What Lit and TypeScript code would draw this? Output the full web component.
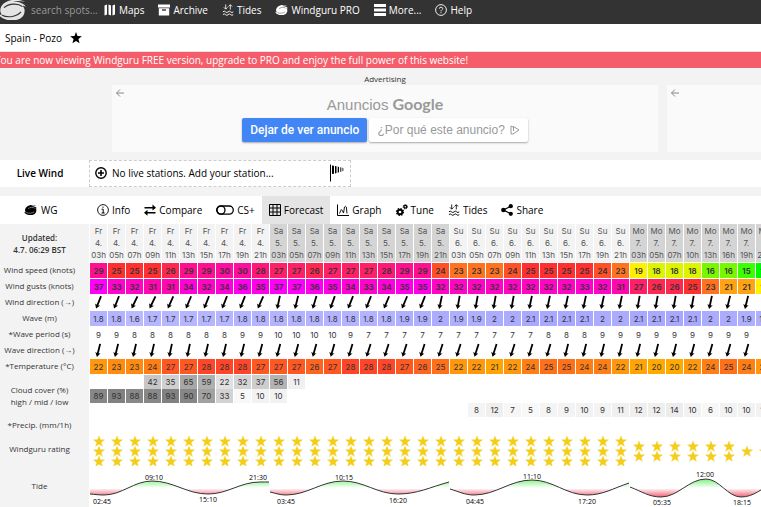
import { LitElement, html, svg, css, nothing } from "lit";
import { customElement } from "lit/decorators.js";
import { styleMap } from "lit/directives/style-map.js";
import { classMap } from "lit/directives/class-map.js";

const blob = svg`<path d="M27 3C21 -0.5 11 0 6 4.5C2 8 1 13 4 16.5C2.500 16.500 1 16 0 15C1.500 19.500 8 22.500 14 22.500C20 22.500 26 19.500 26.500 13.500C27 11 26 8.500 24.500 7C25.500 7 27 7.500 28 8.500C26.500 4.500 21 2.500 15 2.800C19 1.500 23 1.800 27 3Z" fill="currentColor"/>`;
const swirl = svg`${blob}
  <path d="M9 8.500C13 5.500 19 5 23 7.500M22 15.500C18 18.500 10 19.500 5 17" fill="none" class="cut" stroke-width="1"/>`;
const logo = svg`${blob}
  <path d="M6 9C11 4.500 20 4 24.500 8M23 13.500C19 18.500 10 20 4 17" fill="none" class="cut" stroke-width="1.200"/>`;

const waves = svg`
  <path d="M0.500 8.500q1.400 -1.600 2.800 0t2.800 0t2.800 0t2.800 0M0.500 11.500q1.400 -1.600 2.800 0t2.800 0t2.800 0t2.800 0" fill="none" stroke="currentColor"/>
  <path d="M3.500 0.500V5.500M1.500 3.600L3.500 5.600L5.500 3.600M8.500 6V1M6.500 2.700L8.500 0.700L10.500 2.700" fill="none" stroke="currentColor" stroke-width="0.900"/>`;

const icons: Record<string, [number, string, unknown]> = {
  wg: [13, "0 -1 28 25", swirl],
  maps: [12, "0 0 12 12", svg`<path d="M0.500 1.500L3 0.500V10.500L0.500 11.500ZM4.500 0.500L7 1.500V11.500L4.500 10.500ZM8.500 1.500L11 0.500V10.500L8.500 11.500Z" fill="currentColor"/>`],
  archive: [12, "0 0 12 12", svg`<path d="M0 0.500H12V3.500H0ZM0.800 4.300H11.200V11.500H0.800Z" fill="currentColor"/><path d="M4 6H8" class="cut" stroke-width="1.400"/>`],
  tides: [12, "0 0 12 13", waves],
  more: [12, "0 0 12 12", svg`<path d="M0 0H12V3H0ZM0 4.500H12V7.500H0ZM0 9H12V12H0Z" fill="currentColor"/>`],
  help: [12, "0 0 12 12", svg`<circle cx="6" cy="6" r="5.400" fill="none" stroke="currentColor" stroke-width="0.900"/><path d="M4.300 4.700Q4.400 3.200 6 3.200T7.700 4.600Q7.700 5.300 6.800 5.900T6 7.300M6 8.200V9.200" fill="none" stroke="currentColor" stroke-width="0.900"/>`],
  info: [12, "0 0 12 12", svg`<circle cx="6" cy="6" r="5.400" fill="none" stroke="currentColor" stroke-width="0.900"/><path d="M6 2.600V3.800M4.600 5.200H6.200V9M4.500 9H7.700" fill="none" stroke="currentColor"/>`],
  compare: [12, "0 0 12 12", svg`<path d="M0.500 3H8.500V0.500L12 3.700L8.500 6.500V4.500H0.500ZM11.500 8H3.500V5.800L0 8.800L3.500 11.800V9.500H11.500Z" fill="currentColor"/>`],
  toggle: [18, "0 0 18 12", svg`<rect x="0.700" y="2" width="16.600" height="8.200" rx="4.100" fill="none" stroke="currentColor" stroke-width="1.300"/><circle cx="5" cy="6.100" r="4" fill="none" stroke="currentColor" stroke-width="1.300"/>`],
  grid: [12, "0 0 12 12", svg`<path d="M0.500 0.500H11.500V11.500H0.500ZM0.500 4H11.500M0.500 8H11.500M4 0.500V11.500M8 0.500V11.500" fill="none" stroke="currentColor"/>`],
  graph: [12, "0 0 12 12", svg`<path d="M0.500 0.500V11.500H12" fill="none" stroke="currentColor"/><path d="M2.500 9.500L4.300 5.500L5.300 6.500L6.500 9L7.500 3Q8.500 1.500 9.300 3L10 9.500" fill="none" stroke="currentColor" stroke-width="0.900"/>`],
  tune: [12, "0 0 12 12", svg`<circle cx="4" cy="8" r="2.300" fill="none" stroke="currentColor" stroke-width="1.900"/><circle cx="4" cy="8" r="3.500" fill="none" stroke="currentColor" stroke-width="1.200" stroke-dasharray="1.400 1.350"/><circle cx="9.300" cy="2.700" r="1.400" fill="none" stroke="currentColor" stroke-width="1.300"/><circle cx="9.300" cy="2.700" r="2.200" fill="none" stroke="currentColor" stroke-width="0.900" stroke-dasharray="0.900 0.830"/>`],
  share: [12, "0 0 12 12", svg`<path d="M9.800 2.200L2.500 6L9.800 9.800" fill="none" stroke="currentColor" stroke-width="1.300"/><circle cx="2.400" cy="6" r="2.300" fill="currentColor"/><circle cx="9.800" cy="2.200" r="2.100" fill="currentColor"/><circle cx="9.800" cy="9.800" r="2.100" fill="currentColor"/>`],
};

const icon = (name: string) => {
  const [width, box, shape] = icons[name];
  return html`<svg class="icon" width=${width} height="12" viewBox=${box} aria-hidden="true">${shape}</svg>`;
};

const nums = (s: string) => s.split(" ").map((v) => (v === "_" ? "" : v));

const days = [
  { name: "Fr", date: "4.", hours: nums("03 05 07 09 11 13 15 17 19 21") },
  { name: "Sa", date: "5.", hours: nums("03 05 07 09 11 13 15 17 19 21") },
  { name: "Su", date: "6.", hours: nums("03 05 07 09 11 13 15 17 19 21") },
  { name: "Mo", date: "7.", hours: nums("03 05 07 10 13 16 19 22") },
];

const speed = nums("29 25 25 25 26 29 29 30 30 28 27 27 26 27 27 27 28 29 29 24 23 23 23 24 25 25 25 25 24 23 19 18 18 18 16 16 15 14");
const gusts = nums("37 33 32 31 31 34 32 34 36 35 37 37 36 35 34 33 34 35 35 32 32 32 32 32 32 32 32 33 32 31 27 26 26 25 23 21 21 19");
const windDir = nums("22 22 26 26 24 23 22 22 22 24 12 14 17 20 22 22 23 23 22 12 10 10 10 10 12 12 12 12 12 12 10 10 10 10 12 14 14 14").map(Number);
const wave = nums("1.8 1.8 1.6 1.7 1.7 1.7 1.7 1.7 1.8 1.8 1.8 1.8 1.8 1.8 1.8 1.8 1.8 1.9 1.9 2 1.9 1.9 2 2 2.1 2.1 2.1 2.1 2 2 2.1 2.1 2.1 2.1 2 2 1.9 1.9");
const period = nums("9 9 8 8 8 8 8 8 9 9 10 10 10 10 9 7 7 7 7 7 7 7 7 7 7 8 8 8 9 9 9 9 9 9 9 9 9 9");
const waveDir = nums("14 14 13 13 12 12 13 13 14 15 15 15 16 16 17 18 18 18 18 18 18 18 18 18 17 17 14 14 14 14 14 14 14 15 16 16 16 16").map(Number);
const temperature = nums("22 23 23 24 27 27 28 28 28 27 27 27 26 27 28 28 28 27 26 25 22 22 21 22 24 25 25 24 24 22 21 20 20 22 24 25 24 22");
const cloudHigh = nums("_ _ _ 42 35 65 59 22 32 37 56 11 _ _ _ _ _ _ _ _ _ _ _ _ _ _ _ _ _ _ _ _ _ _ _ _ _ _");
const cloudMid = nums("89 93 88 88 93 90 70 33 5 10 10 _ _ _ _ _ _ _ _ _ _ _ _ _ _ _ _ _ _ _ _ _ _ _ _ _ _ _");
const cloudLow = nums("_ _ _ _ _ _ _ _ _ _ _ _ _ _ _ _ _ _ _ _ _ 8 12 7 5 8 9 10 9 11 12 12 14 10 6 10 10 10");
const rating = [...Array(30).fill(3), ...Array(6).fill(2), 1, 1] as number[];

const windScale: Record<string, string> = {
  14: "#00f800", 15: "#3cff00", 16: "#78f800", 18: "#dcf400", 19: "#fff000", 21: "#ffa214", 23: "#ff7220",
  24: "#ff5028", 25: "#ff3030", 26: "#ff2850", 27: "#ff2068", 28: "#ff1878", 29: "#ff1090", 30: "#ff0ca0",
  31: "#ff08b0", 32: "#ff06c4", 33: "#ff04cc", 34: "#ff02d8", 35: "#ff00e8", 36: "#ff00f0", 37: "#ff00fa",
};
const tempScale: Record<string, string> = {
  20: "#ffaa00", 21: "#ffa404", 22: "#ff980c", 23: "#ff8c10", 24: "#ff7e16", 25: "#ff701a", 26: "#ff6420", 27: "#ff5822", 28: "#ff4628",
};
const waveScale = (v: string) => {
  const c = Math.round(186 - (Number(v) - 1.6) * 36);
  return `rgb(${c}, ${c}, 255)`;
};
const cloudScale = (v: string) => {
  if (!v) return "transparent";
  const c = Math.round(255 - Number(v) * 1.35);
  return `rgb(${c}, ${c}, ${c})`;
};

type Knot = [x: number, y: number, extreme: 0 | 1];
const BASE = 23;
const tideDays: Knot[][] = [
  [[0, 28, 0], [14, 29, 1], [62, 15, 1], [118, 28, 1], [170, 16, 1], [179, 16, 0]],
  [[180, 26, 0], [196, 29, 1], [253, 15, 1], [308, 28, 1], [359, 16, 0]],
  [[360, 23, 0], [384, 29, 1], [442, 14, 1], [497, 29, 1], [539, 17, 0]],
  [[540, 21, 0], [571, 31, 1], [616, 13, 1], [651, 31, 1], [684, 16, 0]],
];
const tideLabels: [number, number, string][] = [
  [12, 38, "02:45"], [64, 14, "09:10"], [118, 36, "15:10"], [168, 14, "21:30"], [196, 38, "03:45"], [254, 14, "10:15"],
  [308, 37, "16:20"], [385, 38, "04:45"], [442, 13, "11:10"], [497, 38, "17:20"], [572, 39, "05:35"], [615, 11, "12:00"], [652, 39, "18:15"],
];
const tidePath = (knots: Knot[]) => {
  let d = `M${knots[0][0]} ${knots[0][1]}`;
  for (let i = 1; i < knots.length; i++) {
    const [x0, y0, e0] = knots[i - 1];
    const [x1, y1, e1] = knots[i];
    const dx = (x1 - x0) * 0.38;
    const dy = (y1 - y0) * 0.45;
    d += `C${x0 + dx} ${e0 ? y0 : y0 + dy} ${x1 - dx} ${e1 ? y1 : y1 - dy} ${x1} ${y1}`;
  }
  return d;
};

@customElement("app-root")
export class AppRoot extends LitElement {
  static styles = css`
    :host {
      display: block;
      overflow: hidden;
      background: #fff;
      color: #000;
      font: 10px/16px "Open Sans", "Noto Sans", sans-serif;
    }
    a { color: inherit; text-decoration: none; }
    button, input { font: inherit; color: inherit; border: 0; background: none; padding: 0; margin: 0; }
    .icon { flex: none; overflow: visible; }
    .cut { stroke: #fff; }
    .top {
      display: flex;
      align-items: center;
      height: 24px;
      padding-bottom: 4px;
      box-sizing: border-box;
      background: #333;
      color: #fff;
      white-space: nowrap;
    }
    .top .cut { stroke: #333; }
    .logo { flex: none; width: 26px; height: 20px; overflow: hidden; color: #e4e4e4; }
    .logo svg { display: block; margin-left: -2px; }
    .search { width: 69px; margin-left: 5px; height: 16px; }
    .search::placeholder { color: #999; opacity: 1; }
    .links { display: flex; gap: 14px; margin-left: 4px; }
    .links a { display: flex; align-items: center; gap: 3px; }
    .spot { display: flex; align-items: center; gap: 8px; height: 27px; padding-left: 5px; border-bottom: 1px solid #e4e4e4; }
    .banner { display: block; height: 16px; background: #f55d6a; color: #fff; text-indent: -5px; white-space: nowrap; overflow: hidden; }
    .ads { display: flex; gap: 9px; padding: 5px 0 8px 112px; background: #f3f3f3; }
    .slot { flex: none; width: 546px; text-align: center; font-size: 8px; line-height: 12px; color: #333; }
    .ad {
      height: 67px;
      box-sizing: border-box;
      background: #fafafa;
      display: grid;
      grid-template-columns: 12px 1fr 12px;
      padding: 4px 2px;
      color: #999;
    }
    .ad-body { font: 14px/16px "Liberation Sans", Arial, sans-serif; padding-top: 7px; }
    .ad-title { display: flex; justify-content: center; align-items: baseline; gap: 4px; font-size: 15px; margin-bottom: 5px; }
    .google { font-family: Lato, sans-serif; font-size: 16px; font-weight: 700; }
    .ad-buttons { display: flex; justify-content: center; gap: 2px; font-size: 12px; }
    .ad-buttons button {
      height: 24px;
      padding: 0 8px;
      border-radius: 2px;
      background: #fff;
      box-shadow: 0 1px 2px #0005;
      display: flex;
      align-items: center;
      gap: 5px;
    }
    .ad-buttons .mute { background: #4285f4; color: #fff; font-family: Roboto, sans-serif; font-weight: 500; }
    .live { display: flex; height: 27px; align-items: center; border-bottom: 9px solid #f3f3f3; }
    .live-label { width: 89px; box-sizing: border-box; padding: 0 9px 1px 0; text-align: center; font-weight: 600; }
    .station {
      display: flex;
      align-items: center;
      gap: 5px;
      width: 262px;
      height: 27px;
      box-sizing: border-box;
      padding: 0 6px 1px 5px;
      border: 1px dashed #ccc;
    }
    .sock { margin-left: auto; }
    .tabs { display: flex; height: 28px; white-space: nowrap; }
    .tabs a, .model { display: flex; align-items: center; gap: 3px; padding: 0 7px 1px; }
    .model { width: 90px; box-sizing: border-box; padding-left: 24px; gap: 4px; }
    .tabs .current { background: #e4e4e4; }
    .forecast {
      table-layout: fixed;
      width: 774px;
      border-spacing: 0;
      border-bottom: 1px solid #ccc;
      font: 8px/12px Inter, sans-serif;
      color: #333;
      text-align: center;
    }
    .label-col { width: 90px; }
    .forecast th, .forecast td { padding: 0; box-sizing: border-box; border-right: 1px solid #fff; overflow: hidden; }
    .forecast .label {
      background: #f3f3f3;
      background-clip: padding-box;
      font: 8px/12px "Open Sans", "Noto Sans", sans-serif;
      padding: 0 10px 2px 0;
      white-space: nowrap;
    }
    .forecast .updated { font-weight: 600; padding-bottom: 0; border-bottom: 0; }
    .head th { height: 39px; font-weight: 400; color: #555; border-bottom: 1px solid #fff; background: #f3f3f3; background-clip: padding-box; }
    .head .updated { color: #333; }
    .head .alt { background-color: #d4d4d4; }
    .row { height: 16px; }
    .row td { border-bottom: 1px solid #fff; height: 16px; background-clip: padding-box; }
    .strong td { font-weight: 600; }
    .cloud td { height: 14px; background-clip: padding-box; }
    .cloud-last td { height: 15px; border-bottom: 1px solid #fff; }
    .stars-row td { height: 31px; }
    .stars { display: flex; flex-direction: column; align-items: center; padding-top: 2px; }
    .stars svg, .arrow, .tide { display: block; overflow: visible; }
    .forecast .tide-cell { height: 41px; border-right: 0; }
    .tide text { font: 7px "Open Sans", sans-serif; text-anchor: middle; fill: #000; }
  `;

  private label(text: unknown, rows = 1) {
    return html`<th class="label" scope="row" rowspan=${rows}>${text}</th>`;
  }

  private cells(values: string[], color?: (v: string) => string) {
    return values.map((v) => html`<td style=${color ? styleMap({ backgroundColor: color(v) }) : nothing}>${v}</td>`);
  }

  private arrows(angles: number[]) {
    return angles.map((a) => html`<td><svg class="arrow" width="17" height="15" viewBox="-8.500 -7.500 17 15" role="img" aria-label="${a} degrees">
      <g transform="rotate(${a})"><path d="M-0.900 -6.800H0.900V2.800L2.700 2.200L0 6.600L-2.700 2.200L-0.900 2.800Z" fill="#000"/></g></svg></td>`);
  }

  private table() {
    return html`<table class="forecast">
      <colgroup><col class="label-col" /><col span="38" /></colgroup>
      <thead>
        <tr class="head">
          <th class="label updated" scope="col">Updated:<br />4.7. 06:29 BST</th>
          ${days.map((d, i) => d.hours.map((h) => html`<th scope="col" class=${classMap({ alt: i % 2 === 1 })}>${d.name}<br />${d.date}<br />${h}h</th>`))}
        </tr>
      </thead>
      <tbody>
        <tr class="row strong">${this.label("Wind speed (knots)")}${this.cells(speed, (v) => windScale[v])}</tr>
        <tr class="row strong">${this.label("Wind gusts (knots)")}${this.cells(gusts, (v) => windScale[v])}</tr>
        <tr class="row">${this.label("Wind direction (→)")}${this.arrows(windDir)}</tr>
        <tr class="row">${this.label("Wave (m)")}${this.cells(wave, waveScale)}</tr>
        <tr class="row">${this.label("*Wave period (s)")}${this.cells(period)}</tr>
        <tr class="row">${this.label("Wave direction (→)")}${this.arrows(waveDir)}</tr>
        <tr class="row">${this.label("*Temperature (°C)")}${this.cells(temperature, (v) => tempScale[v])}</tr>
        <tr class="cloud">${this.label(html`Cloud cover (%)<br />high / mid / low`, 3)}${this.cells(cloudHigh, cloudScale)}</tr>
        <tr class="cloud">${this.cells(cloudMid, cloudScale)}</tr>
        <tr class="cloud cloud-last">${this.cells(cloudLow, cloudScale)}</tr>
        <tr class="row">${this.label("*Precip. (mm/1h)")}${this.cells(rating.map(() => ""))}</tr>
        <tr class="stars-row">${this.label("Windguru rating")}${rating.map((n) => html`<td><div class="stars">${Array.from({ length: n }, () => html`
          <svg width="12" height="10" viewBox="-6 -5.500 12 10" aria-hidden="true"><path d="M0 -5.800L1.500 -1.900L5.700 -1.700L2.400 0.900L3.500 5L0 2.700L-3.500 5L-2.400 0.900L-5.700 -1.700L-1.500 -1.900Z" fill="#f5cd14" stroke="#efe08a" stroke-width="0.400"/></svg>`)}</div></td>`)}</tr>
        <tr>${this.label("Tide")}<td class="tide-cell" colspan="38">${this.tide()}</td></tr>
      </tbody>
    </table>`;
  }

  private tide() {
    return html`<svg class="tide" width="684" height="41" viewBox="0 0 684 41" role="img" aria-label="Tide">
      <defs>
        <linearGradient id="high" gradientUnits="userSpaceOnUse" x1="0" y1=${BASE - 1} x2="0" y2="12"><stop offset="0" stop-color="#fff"/><stop offset="1" stop-color="#6ef06e"/></linearGradient>
        <linearGradient id="low" gradientUnits="userSpaceOnUse" x1="0" y1=${BASE - 1} x2="0" y2="31"><stop offset="0" stop-color="#fff"/><stop offset="1" stop-color="#f06474"/></linearGradient>
        <clipPath id="above"><rect x="0" y="0" width="684" height=${BASE}/></clipPath>
        <clipPath id="below"><rect x="0" y=${BASE} width="684" height="18"/></clipPath>
      </defs>
      ${tideDays.map((knots) => {
        const line = tidePath(knots);
        const area = `${line}V${BASE}H${knots[0][0]}Z`;
        return svg`<path d=${area} fill="url(#high)" clip-path="url(#above)"/>
          <path d=${area} fill="url(#low)" clip-path="url(#below)"/>
          <path d=${line} fill="none" stroke="#333"/>`;
      })}
      ${tideLabels.map(([x, y, t]) => svg`<text x=${x} y=${y}>${t}</text>`)}
    </svg>`;
  }

  private back() {
    return html`<svg width="12" height="8" viewBox="0 0 12 8" aria-hidden="true"><path d="M10 4H2.500M6 0.500L2.500 4L6 7.500" fill="none" stroke="#888"/></svg>`;
  }

  render() {
    const menu = [["maps", "Maps"], ["archive", "Archive"], ["tides", "Tides"], ["wg", "Windguru PRO"], ["more", "More..."], ["help", "Help"]];
    const tabs = [["info", "Info"], ["compare", "Compare"], ["toggle", "CS+"], ["grid", "Forecast"], ["graph", "Graph"], ["tune", "Tune"], ["tides", "Tides"], ["share", "Share"]];
    return html`
      <header class="top">
        <a class="logo" href="#" aria-label="Windguru"><svg width="28" height="21" viewBox="0 1 28 22" preserveAspectRatio="none">${logo}</svg></a>
        <input class="search" type="text" placeholder="search spots..." aria-label="search spots..." />
        <nav class="links">${menu.map(([i, t]) => html`<a href="#">${icon(i)}${t}</a>`)}</nav>
      </header>
      <div class="spot">Spain - Pozo
        <svg width="12" height="12" viewBox="-6 -6 12 12" aria-hidden="true"><path d="M0 -6L1.500 -1.900L5.900 -1.700L2.400 1L3.600 5.300L0 2.900L-3.600 5.300L-2.400 1L-5.900 -1.700L-1.500 -1.900Z"/></svg>
      </div>
      <a class="banner" href="#">You are now viewing Windguru FREE version, upgrade to PRO and enjoy the full power of this website!</a>
      <section class="ads">
        <div class="slot">Advertising
          <div class="ad">
            ${this.back()}
            <div class="ad-body">
              <div class="ad-title">Anuncios <span class="google">Google</span></div>
              <div class="ad-buttons">
                <button class="mute">Dejar de ver anuncio</button>
                <button>¿Por qué este anuncio?
                  <svg width="10" height="10" viewBox="0 0 10 10" aria-hidden="true"><path d="M1 1V9M3 9L9 5L3.500 1.500V6M1 1L4 2.500M1 9H3" fill="none" stroke="#999"/></svg>
                </button>
              </div>
            </div>
          </div>
        </div>
        <div class="slot">&nbsp;<div class="ad">${this.back()}</div></div>
      </section>
      <section class="live">
        <span class="live-label">Live Wind</span>
        <a class="station" href="#">
          <svg width="12" height="12" viewBox="0 0 12 12" aria-hidden="true"><circle cx="6" cy="6" r="5.200" fill="none" stroke="#000" stroke-width="1.400"/><path d="M3 6H9M6 3V9" stroke="#000" stroke-width="1.600"/></svg>
          No live stations. Add your station...
          <svg class="sock" width="14" height="18" viewBox="0 0 14 18" aria-hidden="true"><path d="M0.500 0.500V17.500" stroke="#000"/><path d="M2 1.500L4 1.800V9.700L2 10ZM5 2L6.500 2.300V9L5 9.400ZM7.700 2.600L9 2.900V8.300L7.700 8.700ZM10.300 3.200L11.300 3.500V7.500L10.300 7.900ZM12.500 3.800L13.300 4V7L12.500 7.200Z"/></svg>
        </a>
      </section>
      <nav class="tabs">
        <span class="model">${icon("wg")}WG</span>
        ${tabs.map(([i, t]) => html`<a href="#" class=${classMap({ current: t === "Forecast" })}>${icon(i)}${t}</a>`)}
      </nav>
      ${this.table()}
    `;
  }
}
